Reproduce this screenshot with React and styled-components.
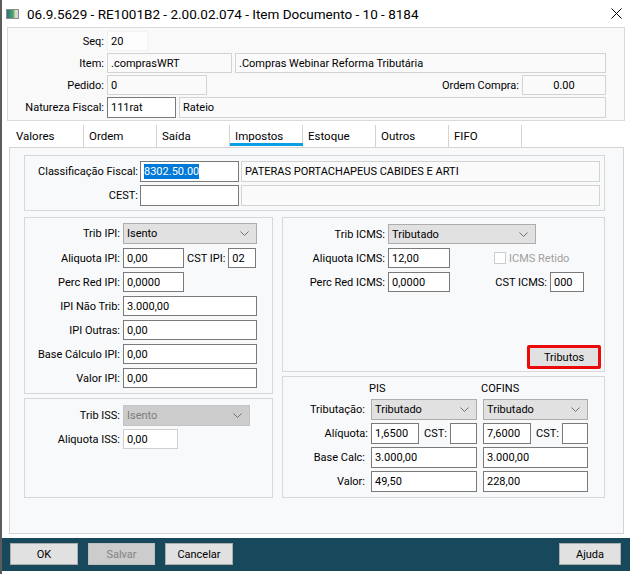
import styled, { createGlobalStyle, css } from 'styled-components'

const GlobalStyle = createGlobalStyle`
  body {
    margin: 0;
    background: #ffffff;
    font-family: Roboto, "Liberation Sans", sans-serif;
    font-size: 11px;
    color: #000;
  }
`

const Frame = styled.div`
  width: 630px;
  height: 574px;
  box-sizing: border-box;
  border-left: 2px solid #5c5c5c;
  background: #ffffff;
  display: flex;
  flex-direction: column;
  overflow: hidden;
`

const TitleBar = styled.div`
  height: 27px;
  flex-shrink: 0;
  display: flex;
  align-items: center;
  gap: 8px;
  padding: 0 8px 0 4px;
  font-size: 13.5px;
`

const CloseBox = styled.div`
  margin-left: auto;
  display: flex;
  align-items: center;
`

const HeaderPanel = styled.div`
  margin: 0 5px;
  height: 94px;
  flex-shrink: 0;
  box-sizing: border-box;
  border: 1px solid #dadada;
  background: #f9f9fa;
  padding: 3px 18px 0 0;
  display: flex;
  flex-direction: column;
  gap: 2px;
`

const Row = styled.div`
  display: flex;
  align-items: center;
  gap: ${(p) => p.$gap ?? 3}px;
  height: ${(p) => p.$h ?? 20}px;
  flex-shrink: 0;
`

const Label = styled.span`
  width: ${(p) => p.$w}px;
  flex-shrink: 0;
  text-align: ${(p) => (p.$left ? 'left' : 'right')};
  white-space: nowrap;
  color: ${(p) => (p.$muted ? '#a0a0a0' : '#000')};
`

const tones = {
  edit: css`
    background: #ffffff;
    border-color: #7a7a7a;
  `,
  ro: css`
    background: #fafafa;
    border-color: #d3d3d3;
  `,
  blank: css`
    background: #fdfdfd;
    border-color: #f2f2f2;
  `,
  soft: css`
    background: #ffffff;
    border-color: #cfcfcf;
  `,
}

const Field = styled.div`
  ${(p) => (p.$w ? `width: ${p.$w}px; flex-shrink: 0;` : 'flex: 1;')}
  height: 100%;
  box-sizing: border-box;
  border: 1px solid;
  ${(p) => tones[p.$tone || 'edit']}
  padding: 0 3px;
  display: flex;
  align-items: center;
  justify-content: ${(p) => (p.$center ? 'center' : 'flex-start')};
  white-space: nowrap;
  overflow: hidden;
`

const Selected = styled.span`
  background: #0078d7;
  color: #ffffff;
  padding: 1px 0;
`

const Select = styled.div`
  width: ${(p) => p.$w}px;
  flex-shrink: 0;
  height: 100%;
  box-sizing: border-box;
  border: 1px solid ${(p) => (p.$disabled ? '#c4c4c4' : '#adadad')};
  background: ${(p) => (p.$disabled ? '#cccccc' : '#e1e1e1')};
  color: ${(p) => (p.$disabled ? '#7d7d7d' : '#000')};
  display: flex;
  align-items: center;
  justify-content: space-between;
  padding: 0 7px 0 3px;
`

const Spacer = styled.div`
  flex: 1;
`

const TabBar = styled.div`
  height: 26px;
  flex-shrink: 0;
  display: flex;
  padding-left: 9px;
  font-size: 11.5px;
`

const Tab = styled.div`
  width: 73px;
  margin-top: 4px;
  box-sizing: border-box;
  border-right: 1px solid #d3d3d3;
  padding-left: 5px;
  display: flex;
  align-items: center;
  position: relative;
  ${(p) =>
    p.$active &&
    css`
      &::after {
        content: '';
        position: absolute;
        left: 0;
        right: -1px;
        bottom: 1px;
        height: 3px;
        background: #0a9fe3;
      }
    `}
`

const TabPanel = styled.div`
  margin: 0 6px 0 7px;
  height: 387px;
  flex-shrink: 0;
  box-sizing: border-box;
  border: 1px solid #d4d4d4;
  background: #f8f9fa;
  padding: 7px 18px 0 14px;
`

const Group = styled.div`
  height: ${(p) => p.$h}px;
  box-sizing: border-box;
  border: 1px solid #d7d7d7;
  background: #f8f9fa;
  display: flex;
  flex-direction: column;
  gap: ${(p) => p.$gap ?? 4}px;
  padding: ${(p) => p.$pad || '5px 0 0 0'};
  margin-top: ${(p) => p.$mt ?? 0}px;
`

const Columns = styled.div`
  margin-top: 6px;
  display: grid;
  grid-template-columns: 249px 323px;
  column-gap: 9px;
  align-items: start;
`

const Column = styled.div`
  display: flex;
  flex-direction: column;
`

const CheckBox = styled.span`
  width: 12px;
  height: 12px;
  box-sizing: border-box;
  border: 1px solid #cccccc;
  background: #ffffff;
  margin-left: 41px;
  flex-shrink: 0;
`

const TributosButton = styled.div`
  margin-top: auto;
  align-self: flex-end;
  width: 74px;
  height: 24px;
  box-sizing: border-box;
  border: 3px solid #ea0a0a;
  border-radius: 2px;
  background: #e1e1e1;
  display: flex;
  align-items: center;
  justify-content: center;
`

const ColHead = styled.div`
  height: 17px;
  display: flex;
  align-items: center;
  gap: 6px;
  padding-left: 86px;
  margin-bottom: -1px;
`

const ColTitle = styled.span`
  width: ${(p) => p.$w}px;
`

const BottomBar = styled.div`
  margin-top: 4px;
  height: 33px;
  flex-shrink: 0;
  box-sizing: border-box;
  background: #17485b;
  padding: 5px 9px 0 8px;
  display: flex;
  gap: 10px;
`

const Button = styled.div`
  width: ${(p) => p.$w}px;
  height: 22px;
  box-sizing: border-box;
  border: 1px solid ${(p) => (p.$disabled ? '#bfbfbf' : '#adadad')};
  background: ${(p) => (p.$disabled ? '#cccccc' : '#e1e1e1')};
  color: ${(p) => (p.$disabled ? '#838383' : '#000')};
  display: flex;
  align-items: center;
  justify-content: center;
  ${(p) => p.$right && 'margin-left: auto;'}
`

function WindowIcon() {
  return (
    <svg width="13" height="10" viewBox="0 0 13 10">
      <defs>
        <linearGradient id="wg" x1="0" y1="0" x2="1" y2="0">
          <stop offset="0" stopColor="#2f6e86" />
          <stop offset="0.6" stopColor="#3f9b72" />
          <stop offset="1" stopColor="#72b85a" />
        </linearGradient>
      </defs>
      <rect x="0.5" y="0.5" width="12" height="9" fill="#d9d9d9" stroke="#8c8c8c" />
      <rect x="1" y="1" width="7.5" height="8" fill="url(#wg)" />
    </svg>
  )
}

function Chevron() {
  return (
    <svg width="9" height="5" viewBox="0 0 9 5">
      <polyline points="0.5,0.5 4.5,4.5 8.5,0.5" fill="none" stroke="#707070" strokeWidth="1" />
    </svg>
  )
}

function Dropdown({ w, value, disabled }) {
  return (
    <Select $w={w} $disabled={disabled}>
      <span>{value}</span>
      <Chevron />
    </Select>
  )
}

const tabs = ['Valores', 'Ordem', 'Saída', 'Impostos', 'Estoque', 'Outros', 'FIFO']

export default function App() {
  return (
    <>
      <GlobalStyle />
      <Frame>
        <TitleBar>
          <WindowIcon />
          <span>06.9.5629 - RE1001B2 - 2.00.02.074 - Item Documento - 10 - 8184</span>
          <CloseBox>
            <svg width="11" height="11" viewBox="0 0 11 11">
              <path d="M0.5 0.5 L10.5 10.5 M10.5 0.5 L0.5 10.5" stroke="#000" strokeWidth="1" />
            </svg>
          </CloseBox>
        </TitleBar>

        <HeaderPanel>
          <Row>
            <Label $w={96}>Seq:</Label>
            <Field $w={41} $tone="blank">20</Field>
          </Row>
          <Row>
            <Label $w={96}>Item:</Label>
            <Field $w={125} $tone="ro">.comprasWRT</Field>
            <Field $tone="ro">.Compras Webinar Reforma Tributária</Field>
          </Row>
          <Row>
            <Label $w={96}>Pedido:</Label>
            <Field $w={100} $tone="ro">0</Field>
            <Spacer />
            <Label $w={90}>Ordem Compra:</Label>
            <Field $w={84} $tone="ro" $center>0.00</Field>
          </Row>
          <Row $h={21}>
            <Label $w={96}>Natureza Fiscal:</Label>
            <Field $w={69}>111rat</Field>
            <Field $tone="ro">Rateio</Field>
          </Row>
        </HeaderPanel>

        <TabBar>
          {tabs.map((t) => (
            <Tab key={t} $active={t === 'Impostos'}>
              {t}
            </Tab>
          ))}
        </TabBar>

        <TabPanel>
          <Group $h={56} $gap={3} $pad="5px 4px 0 0">
            <Row $h={21} $gap={2}>
              <Label $w={113}>Classificação Fiscal:</Label>
              <Field $w={99}>
                <Selected>8302.50.00</Selected>
              </Field>
              <Field $tone="ro">PATERAS PORTACHAPEUS CABIDES E ARTI</Field>
            </Row>
            <Row $h={21} $gap={2}>
              <Label $w={113}>CEST:</Label>
              <Field $w={99} />
              <Field $tone="ro" />
            </Row>
          </Group>

          <Columns>
            <Column>
              <Group $h={177}>
                <Row $h={21}>
                  <Label $w={95}>Trib IPI:</Label>
                  <Dropdown w={134} value="Isento" />
                </Row>
                <Row>
                  <Label $w={95}>Aliquota IPI:</Label>
                  <Field $w={61}>0,00</Field>
                  <span>CST IPI:</span>
                  <Field $w={28}>02</Field>
                </Row>
                <Row>
                  <Label $w={95}>Perc Red IPI:</Label>
                  <Field $w={61}>0,0000</Field>
                </Row>
                <Row>
                  <Label $w={95}>IPI Não Trib:</Label>
                  <Field $w={134}>3.000,00</Field>
                </Row>
                <Row>
                  <Label $w={95}>IPI Outras:</Label>
                  <Field $w={134}>0,00</Field>
                </Row>
                <Row>
                  <Label $w={95}>Base Cálculo IPI:</Label>
                  <Field $w={134}>0,00</Field>
                </Row>
                <Row>
                  <Label $w={95}>Valor IPI:</Label>
                  <Field $w={134}>0,00</Field>
                </Row>
              </Group>

              <Group $h={100} $mt={4} $gap={3} $pad="6px 0 0 0">
                <Row $h={21}>
                  <Label $w={95}>Trib ISS:</Label>
                  <Dropdown w={127} value="Isento" disabled />
                </Row>
                <Row>
                  <Label $w={95}>Aliquota ISS:</Label>
                  <Field $w={55} $tone="soft">0,00</Field>
                </Row>
              </Group>
            </Column>

            <Column>
              <Group $h={155} $pad="6px 3px 2px 0">
                <Row>
                  <Label $w={102}>Trib ICMS:</Label>
                  <Dropdown w={148} value="Tributado" />
                </Row>
                <Row>
                  <Label $w={102}>Aliquota ICMS:</Label>
                  <Field $w={62}>12,00</Field>
                  <CheckBox />
                  <Label $w={70} $muted $left>ICMS Retido</Label>
                </Row>
                <Row>
                  <Label $w={102}>Perc Red ICMS:</Label>
                  <Field $w={62}>0,0000</Field>
                  <Label $w={94}>CST ICMS:</Label>
                  <Field $w={34}>000</Field>
                </Row>
                <TributosButton>Tributos</TributosButton>
              </Group>

              <Group $h={122} $mt={4} $gap={3} $pad="3px 0 0 0">
                <ColHead>
                  <ColTitle $w={106}>PIS</ColTitle>
                  <ColTitle $w={105}>COFINS</ColTitle>
                </ColHead>
                <Row $h={21} $gap={6}>
                  <Label $w={82}>Tributação:</Label>
                  <Dropdown w={106} value="Tributado" />
                  <Dropdown w={105} value="Tributado" />
                </Row>
                <Row $h={21}>
                  <Label $w={85}>Alíquota:</Label>
                  <Field $w={48}>1,6500</Field>
                  <Label $w={25}>CST:</Label>
                  <Field $w={27} />
                  <Spacer style={{ flex: '0 0 0px' }} />
                  <Field $w={48}>7,6000</Field>
                  <Label $w={25}>CST:</Label>
                  <Field $w={26} />
                </Row>
                <Row $h={21} $gap={6}>
                  <Label $w={82}>Base Calc:</Label>
                  <Field $w={106}>3.000,00</Field>
                  <Field $w={105}>3.000,00</Field>
                </Row>
                <Row $h={21} $gap={6}>
                  <Label $w={82}>Valor:</Label>
                  <Field $w={106}>49,50</Field>
                  <Field $w={105}>228,00</Field>
                </Row>
              </Group>
            </Column>
          </Columns>
        </TabPanel>

        <BottomBar>
          <Button $w={68}>OK</Button>
          <Button $w={67} $disabled>Salvar</Button>
          <Button $w={68}>Cancelar</Button>
          <Button $w={62} $right>Ajuda</Button>
        </BottomBar>
      </Frame>
    </>
  )
}
